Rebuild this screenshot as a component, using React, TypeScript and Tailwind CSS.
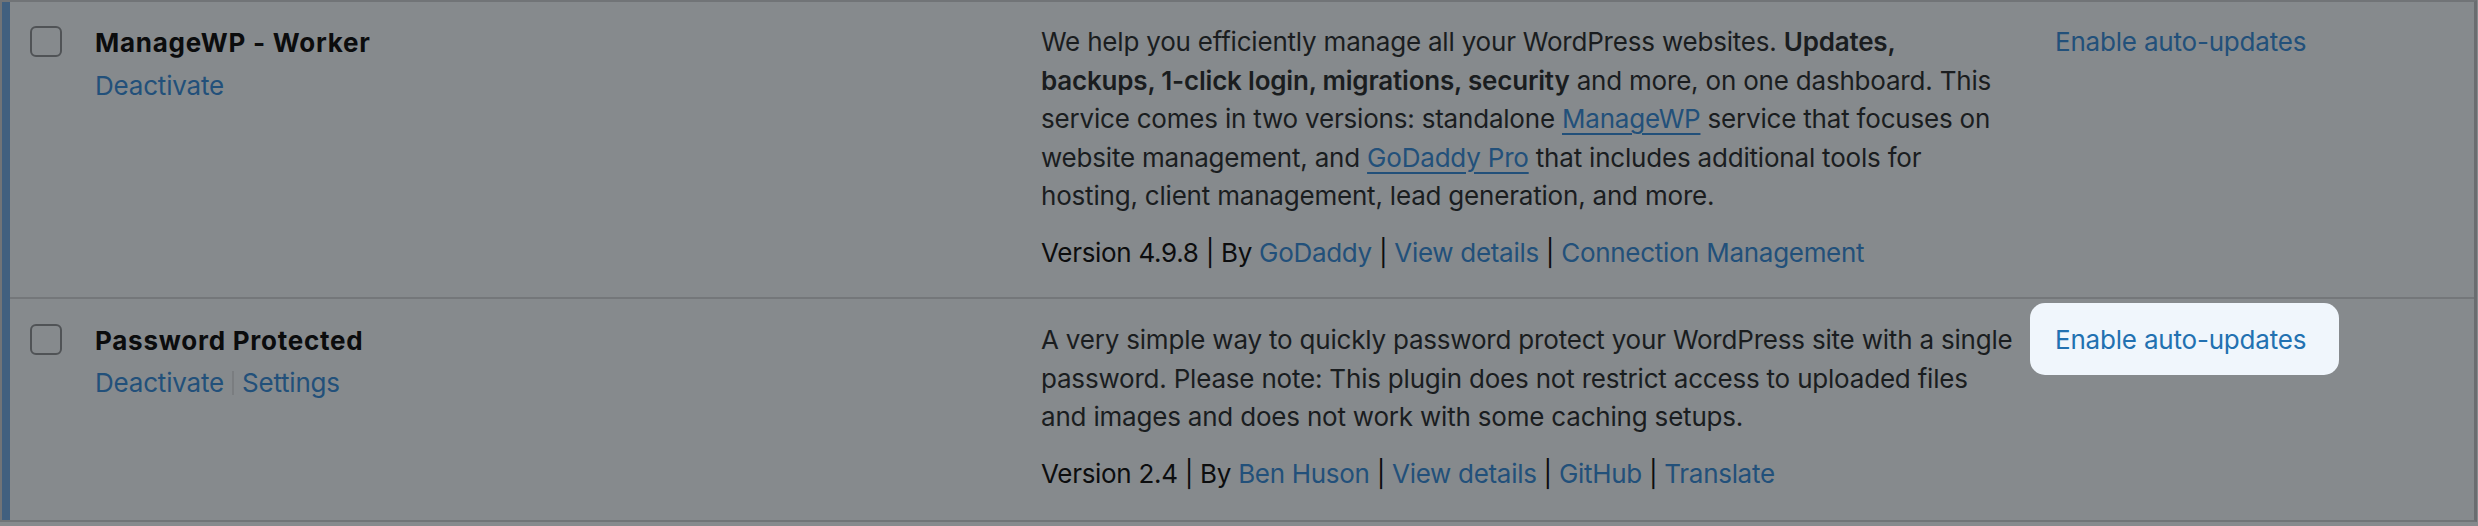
const font = { fontFamily: 'Inter, "Noto Sans", sans-serif' };

function Checkbox() {
  return <div className="w-[32px] h-[31px] rounded-[6px] border-2 border-[#505356]" />;
}

function Sep() {
  return <span className="text-[#0c0d0e]"> | </span>;
}

function Link({ children, underline }: { children: React.ReactNode; underline?: boolean }) {
  return (
    <a
      className={
        underline
          ? 'text-[#22507a] underline decoration-2 underline-offset-[5px]'
          : 'text-[#22507a]'
      }
    >
      {children}
    </a>
  );
}

export default function App() {
  return (
    <div className="w-[2478px] h-[526px] bg-[#868a8d]" style={font}>
      <div className="border-t-2 border-b-2 border-r-[3px] border-l-2 border-[#717477] border-r-[#6a6d70] mr-[1px]">
        <div className="border-l-[8px] border-[#41607f] text-[26px] leading-[39px] tracking-[-0.2px]">
          {/* Row 1 */}
          <div className="flex h-[297px] border-b-2 border-[#74777a]">
            <div className="w-[75px] pl-[20px] pt-[24px] shrink-0">
              <Checkbox />
            </div>
            <div className="w-[936px] pl-[10px] pt-[21px] shrink-0">
              <div className="font-bold tracking-[0.75px] text-[#0b0c0d]">ManageWP - Worker</div>
              <div className="mt-[4px]">
                <Link>Deactivate</Link>
              </div>
            </div>
            <div className="w-[1014px] px-[20px] pt-[21px] shrink-0 text-[#1a1d1f]">
              <p className="leading-[38.5px] whitespace-nowrap">
                We help you efficiently manage all your WordPress websites.{' '}
                <strong className="font-semibold">Updates,</strong>
                <br />
                <strong className="font-semibold">
                  backups, 1-click login, migrations, security
                </strong>{' '}
                and more, on one dashboard. This
                <br />
                service comes in two versions: standalone <Link underline>ManageWP</Link> service
                that focuses on
                <br />
                website management, and <Link underline>GoDaddy Pro</Link> that includes additional
                tools for
                <br />
                hosting, client management, lead generation, and more.
              </p>
              <div className="mt-[17px] text-[#0c0d0e] whitespace-nowrap tracking-[-0.3px]">
                Version 4.9.8
                <Sep />
                By <Link>GoDaddy</Link>
                <Sep />
                <Link>View details</Link>
                <Sep />
                <Link>Connection Management</Link>
              </div>
            </div>
            <div className="flex-1 pl-[20px] pt-[20px]">
              <Link>Enable auto-updates</Link>
            </div>
          </div>

          {/* Row 2 */}
          <div className="flex h-[221px]">
            <div className="w-[75px] pl-[20px] pt-[25px] shrink-0">
              <Checkbox />
            </div>
            <div className="w-[936px] pl-[10px] pt-[22px] shrink-0">
              <div className="font-bold tracking-[0.75px] text-[#0b0c0d]">Password Protected</div>
              <div className="mt-[3px] flex items-center">
                <Link>Deactivate</Link>
                <span className="mx-[8px] w-[2px] h-[24px] bg-[#7a7d80]" />
                <Link>Settings</Link>
              </div>
            </div>
            <div className="w-[1014px] px-[20px] pt-[22px] shrink-0 text-[#1a1d1f]">
              <p className="leading-[38.5px] whitespace-nowrap">
                A very simple way to quickly password protect your WordPress site with a single
                <br />
                password. Please note: This plugin does not restrict access to uploaded files
                <br />
                and images and does not work with some caching setups.
              </p>
              <div className="mt-[17px] text-[#0c0d0e] whitespace-nowrap tracking-[-0.3px]">
                Version 2.4
                <Sep />
                By <Link>Ben Huson</Link>
                <Sep />
                <Link>View details</Link>
                <Sep />
                <Link>GitHub</Link>
                <Sep />
                <Link>Translate</Link>
              </div>
            </div>
            <div className="flex-1 pl-[20px] pt-[4px]">
              <div className="-ml-[25px] inline-block w-[309px] h-[72px] rounded-[15px] bg-[#f0f6fc] pl-[25px] pt-[17px]">
                <a className="text-[#2271b1]">Enable auto-updates</a>
              </div>
            </div>
          </div>
        </div>
      </div>
    </div>
  );
}
